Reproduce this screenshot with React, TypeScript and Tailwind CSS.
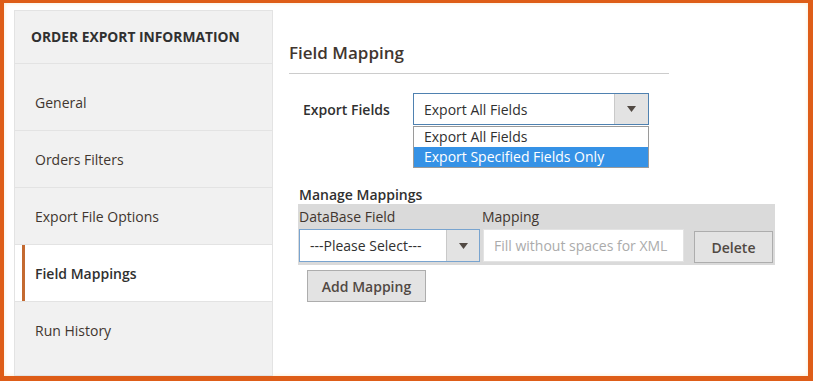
const font = { fontFamily: '"Open Sans", "Noto Sans", Arial, sans-serif' };

function Arrow() {
  return (
    <svg width="9" height="6" viewBox="0 0 9 6">
      <path d="M0 0h9L4.5 6z" fill="#514943" />
    </svg>
  );
}

const navItems = ["General", "Orders Filters", "Export File Options", "Field Mappings", "Run History"];

function Sidebar() {
  return (
    <aside className="flex w-[259px] shrink-0 flex-col border border-[#e3e3e3] bg-[#f1f1f1]">
      <div className="flex h-[53px] items-center border-b border-[#e3e3e3] pl-4 text-[13.8px] font-bold text-[#303030]">
        ORDER EXPORT INFORMATION
      </div>
      <ul className="mt-[10px] flex flex-col">
        {navItems.map((item) => {
          const active = item === "Field Mappings";
          return (
            <li
              key={item}
              className={
                active
                  ? "relative flex h-[57px] items-center border-b border-[#e3e3e3] bg-white pl-5 text-[14px] font-semibold text-[#303030]"
                  : "flex h-[57px] items-center border-b border-[#e3e3e3] pl-5 text-[14px] text-[#41362f] last:border-b-0"
              }
            >
              {active && <span className="absolute left-[7px] top-0 h-full w-[3px] bg-[#c46a31]" />}
              {item}
            </li>
          );
        })}
      </ul>
    </aside>
  );
}

export default function App() {
  return (
    <div style={font} className="h-[381px] w-[813px] overflow-hidden bg-[#de5d18] pb-[5px] pl-[4px] pr-[5px] pt-[3px]">
      <div className="flex h-full gap-4 bg-white pl-[10px] pt-[7px] shadow-[inset_0_0_4px_#fbe9cf]">
        <Sidebar />
        <main className="flex w-[490px] flex-col">
          <h2 className="mt-[31px] w-[380px] border-b border-[#cccccc] pb-[8px] text-[17px] font-semibold leading-[24px] text-[#41362f]">
            Field Mapping
          </h2>
          <div className="mt-[19px] flex items-center">
            <span className="w-[124px] pl-[14px] text-[14px] font-semibold text-[#303030]">Export Fields</span>
            <div className="relative">
              <div className="flex h-[32px] w-[236px] border border-[#4f81b0] bg-white">
                <span className="flex flex-1 items-center pl-[10px] text-[14px] text-[#303030]">Export All Fields</span>
                <span className="flex w-[34px] items-center justify-center border-l border-[#c9c9c9] bg-[#e3e3e3]">
                  <Arrow />
                </span>
              </div>
              <ul className="absolute left-0 top-[33px] w-[236px] border border-[#9a9a9a] bg-white text-[14px] leading-[20px]">
                <li className="h-[20px] pl-[10px] text-[#303030]">Export All Fields</li>
                <li className="h-[20px] bg-[#3592e6] pl-[10px] text-white">Export Specified Fields Only</li>
              </ul>
            </div>
          </div>
          <div className="ml-[10px] mt-[61px] text-[14px] font-semibold leading-[18px] text-[#303030]">Manage Mappings</div>
          <div className="ml-[9px] w-[477px] bg-[#dadada] pb-[2px]">
            <div className="flex h-[24px] items-center text-[14px] text-[#41362f]">
              <span className="w-[184px] pl-[1px]">DataBase Field</span>
              <span>Mapping</span>
            </div>
            <div className="flex items-center pl-[1px]">
              <div className="flex h-[33px] w-[181px] border border-[#79a4cf] bg-white">
                <span className="flex flex-1 items-center pl-[10px] text-[14px] text-[#303030]">---Please Select---</span>
                <span className="flex w-[33px] items-center justify-center border-l border-[#c9c9c9] bg-[#e3e3e3]">
                  <Arrow />
                </span>
              </div>
              <div className="ml-[3px] flex h-[33px] w-[201px] items-center border border-[#e3e3e3] bg-white pl-[10px] text-[14px] text-[#ababab]">
                Fill without spaces for XML
              </div>
              <button className="ml-[10px] mt-[3px] h-[32px] w-[79px] border border-[#adadad] bg-[#e3e3e3] text-[14px] font-semibold text-[#514943]">
                Delete
              </button>
            </div>
          </div>
          <button className="ml-[18px] mt-[5px] h-[32px] w-[119px] border border-[#adadad] bg-[#e3e3e3] text-[14px] font-semibold text-[#514943]">
            Add Mapping
          </button>
        </main>
      </div>
    </div>
  );
}
